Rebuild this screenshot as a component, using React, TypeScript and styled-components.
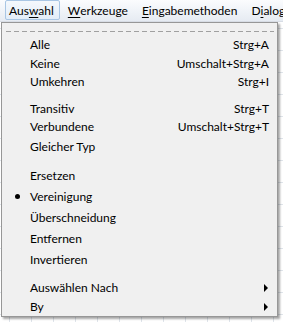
import React from "react";
import styled, { createGlobalStyle } from "styled-components";

const Global = createGlobalStyle`
  html, body { margin: 0; padding: 0; background: #ffffff; }
  body { font-family: "Lato", "Noto Sans", sans-serif; font-size: 12px; color: #000; }
`;

const Page = styled.div`
  position: relative;
  width: 283px;
  height: 322px;
  overflow: hidden;
  display: flex;
  flex-direction: column;
`;

const MenuBar = styled.div`
  height: 22px;
  flex: 0 0 22px;
  display: flex;
  align-items: stretch;
  padding-left: 5px;
  background: linear-gradient(#fbfcfe, #eef2f7 60%, #e6ebf2);
  border-bottom: 1px solid #d8dde5;
  box-sizing: border-box;
  overflow: hidden;
`;

const BarItem = styled.div<{ $active?: boolean }>`
  display: flex;
  align-items: center;
  height: 20px;
  padding: 0 5px 0 3px;
  margin-right: 4px;
  box-sizing: border-box;
  white-space: nowrap;
  flex-shrink: 0;
  border: 1px solid ${(p) => (p.$active ? "#a9c6e4" : "transparent")};
  border-radius: 2px;
  background: ${(p) => (p.$active ? "linear-gradient(#f4f8fc, #e3edf8)" : "transparent")};
`;

const U = styled.span`
  text-decoration: underline;
  text-underline-offset: 2px;
`;

const Canvas = styled.div`
  flex: 1;
  background-color: #ffffff;
  background-image: linear-gradient(90deg, #dfe4ea 1px, transparent 1px),
    linear-gradient(#dfe4ea 1px, transparent 1px);
  background-size: 22px 22px;
  background-position: 9px 6px;
`;

const Popup = styled.div`
  position: absolute;
  left: 1px;
  top: 22px;
  width: 277px;
  height: 295px;
  box-sizing: border-box;
  background: #f0f0f0;
  border: 1px solid #979797;
  box-shadow: 2px 2px 2px rgba(0, 0, 0, 0.35);
  display: flex;
  flex-direction: column;
`;

const Tearoff = styled.div`
  height: 12px;
  flex: 0 0 12px;
  display: flex;
  align-items: flex-start;
  padding: 8px 3px 0 4px;
  box-sizing: border-box;
`;

const Dashes = styled.div`
  flex: 1;
  height: 1px;
  background-image: linear-gradient(90deg, #a0a0a0 5px, transparent 5px);
  background-size: 8px 1px;
`;

const Item = styled.div<{ $h: number }>`
  position: relative;
  height: ${(p) => p.$h}px;
  flex: 0 0 ${(p) => p.$h}px;
  display: flex;
  align-items: center;
  padding: 0 8px 0 28px;
  white-space: nowrap;
`;

const Label = styled.span`
  flex: 1;
`;

const Shortcut = styled.span`
  text-align: right;
`;

const Gap = styled.div<{ $h: number }>`
  height: ${(p) => p.$h}px;
  flex: 0 0 ${(p) => p.$h}px;
`;

const Bullet = styled.span`
  position: absolute;
  left: 13px;
  top: 50%;
  width: 5px;
  height: 5px;
  margin-top: -3px;
  border-radius: 50%;
  background: #000;
`;

const Arrow = styled.span`
  width: 0;
  height: 0;
  border-top: 4px solid transparent;
  border-bottom: 4px solid transparent;
  border-left: 4px solid #000;
  margin-right: 1px;
`;

type Entry =
  | { kind: "item"; label: string; h: number; shortcut?: string; bullet?: boolean; sub?: boolean }
  | { kind: "gap"; h: number };

const entries: Entry[] = [
  { kind: "item", label: "Alle", shortcut: "Strg+A", h: 19 },
  { kind: "item", label: "Keine", shortcut: "Umschalt+Strg+A", h: 18 },
  { kind: "item", label: "Umkehren", shortcut: "Strg+I", h: 18 },
  { kind: "gap", h: 9 },
  { kind: "item", label: "Transitiv", shortcut: "Strg+T", h: 18 },
  { kind: "item", label: "Verbundene", shortcut: "Umschalt+Strg+T", h: 19 },
  { kind: "item", label: "Gleicher Typ", h: 21 },
  { kind: "gap", h: 8 },
  { kind: "item", label: "Ersetzen", h: 21 },
  { kind: "item", label: "Vereinigung", h: 21, bullet: true },
  { kind: "item", label: "Überschneidung", h: 21 },
  { kind: "item", label: "Entfernen", h: 21 },
  { kind: "item", label: "Invertieren", h: 21 },
  { kind: "gap", h: 8 },
  { kind: "item", label: "Auswählen Nach", h: 19, sub: true },
  { kind: "item", label: "By", h: 19, sub: true },
];

export default function App() {
  return (
    <>
      <Global />
      <Page>
        <MenuBar>
          <BarItem $active>
            Aus<U>w</U>ahl
          </BarItem>
          <BarItem>
            <U>W</U>erkzeuge
          </BarItem>
          <BarItem>
            <U>E</U>ingabemethoden
          </BarItem>
          <BarItem>
            D<U>i</U>alog
          </BarItem>
        </MenuBar>
        <Canvas />
        <Popup>
          <Tearoff>
            <Dashes />
          </Tearoff>
          {entries.map((e, i) =>
            e.kind === "gap" ? (
              <Gap key={i} $h={e.h} />
            ) : (
              <Item key={i} $h={e.h}>
                {e.bullet && <Bullet />}
                <Label>{e.label}</Label>
                {e.shortcut && <Shortcut>{e.shortcut}</Shortcut>}
                {e.sub && <Arrow />}
              </Item>
            )
          )}
        </Popup>
      </Page>
    </>
  );
}
